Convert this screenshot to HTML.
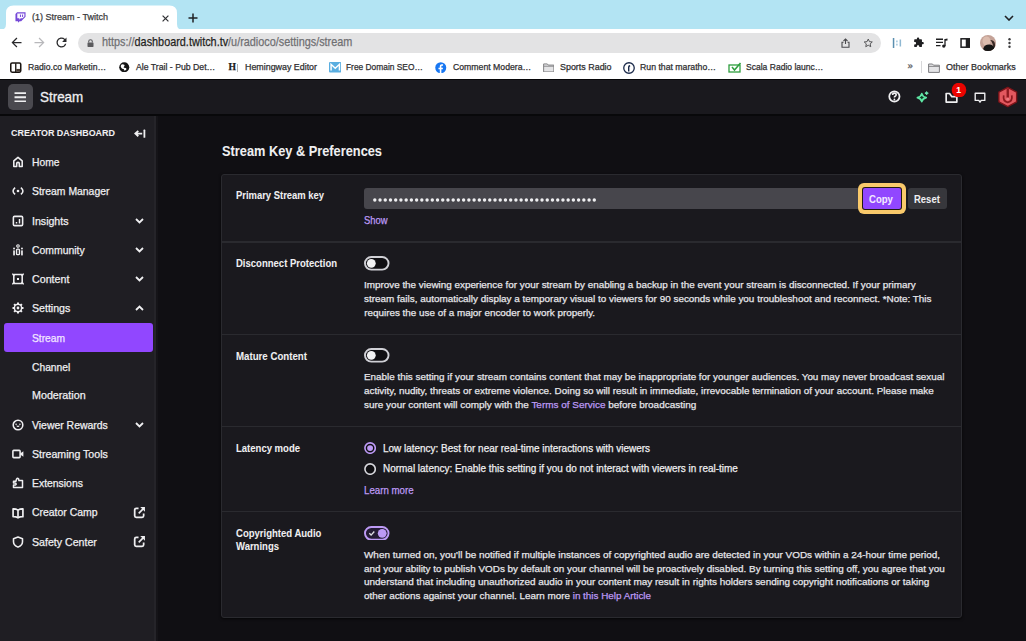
<!DOCTYPE html>
<html><head><meta charset="utf-8"><title>Stream - Twitch</title>
<style>
html,body{margin:0;padding:0;}
body{width:1026px;height:641px;overflow:hidden;position:relative;background:#100f13;font-family:"Liberation Sans",sans-serif;}
.r{position:absolute;display:block;}
.t{position:absolute;white-space:nowrap;line-height:1;transform-origin:0 0;-webkit-text-stroke:0.25px currentColor;}
</style></head><body>
<div class="r" style="left:0.00px;top:0.00px;width:1026.00px;height:29.40px;background:#b3e4f3;"></div>
<div class="r" style="left:0.00px;top:29.40px;width:1026.00px;height:49.60px;background:#ffffff;"></div>
<svg class="r" style="left:0.00px;top:4.00px;" width="190" height="27" viewBox="0 0 190 27"><path d="M0 26 Q6 26 6 20 L6 9 Q6 1.5 13.5 1.5 L169.5 1.5 Q177 1.5 177 9 L177 20 Q177 26 183 26 L183 27 L0 27 Z" fill="#ffffff"/></svg>
<svg class="r" style="left:15.00px;top:11.80px;" width="11" height="11" viewBox="0 0 24 24"><path d="M4.5 0.5 L1 4.5 V20 H6.5 V23.5 L10 20 H13.5 L23 10.5 V0.5 Z" fill="#7548d8"/><path d="M5 3 H20.5 V9.8 L16.5 13.8 H12.5 L9.5 16.8 V13.8 H5 Z" fill="#fbf8ff"/><rect x="10.8" y="5.6" width="2.2" height="5.2" fill="#7548d8"/><rect x="15.4" y="5.6" width="2.2" height="5.2" fill="#7548d8"/></svg>
<div class="t" style="left:31.70px;top:12.98px;font-size:9.00px;color:#3c3c3e;transform:scaleX(1.0020);">(1) Stream - Twitch</div>
<svg class="r" style="left:162.00px;top:14.80px;" width="7" height="7" viewBox="0 0 7 7"><path d="M0.6 0.6 L6.4 6.4 M6.4 0.6 L0.6 6.4" stroke="#303134" stroke-width="1.2"/></svg>
<svg class="r" style="left:188.00px;top:13.00px;" width="10" height="10" viewBox="0 0 10 10"><path d="M5 0.5 V9.5 M0.5 5 H9.5" stroke="#202124" stroke-width="1.5"/></svg>
<svg class="r" style="left:1004.00px;top:14.50px;" width="10" height="6" viewBox="0 0 10 6"><path d="M1 1 L5 5 L9 1" stroke="#202124" stroke-width="1.6" fill="none"/></svg>
<svg class="r" style="left:8.60px;top:35.20px;" width="15" height="15" viewBox="0 0 24 24"><path d="M20 11H7.83l5.59-5.59L12 4l-8 8 8 8 1.41-1.41L7.83 13H20v-2z" fill="#2a2a2c"/></svg>
<svg class="r" style="left:31.60px;top:35.20px;" width="15" height="15" viewBox="0 0 24 24"><path d="M4 11h12.17l-5.59-5.59L12 4l8 8-8 8-1.41-1.41L16.17 13H4v-2z" fill="#b8b8bb"/></svg>
<svg class="r" style="left:54.20px;top:35.20px;" width="15" height="15" viewBox="0 0 24 24"><path d="M17.65 6.35A7.958 7.958 0 0 0 12 4c-4.42 0-7.99 3.58-7.99 8s3.57 8 7.99 8c3.73 0 6.84-2.55 7.73-6h-2.08A5.99 5.99 0 0 1 12 18c-3.31 0-6-2.690-6-6s2.69-6 6-6c1.66 0 3.14.69 4.22 1.78L13 11h7V4l-2.35 2.35z" fill="#2a2a2c"/></svg>
<div class="r" style="left:77.50px;top:32.80px;width:803.00px;height:19.80px;background:#e3e3e4;border-radius:10px;"></div>
<svg class="r" style="left:86.50px;top:39.00px;" width="7" height="8" viewBox="0 0 7 8"><path d="M1.7 3.6 V2.6 A1.8 1.8 0 0 1 5.3 2.6 V3.6" stroke="#5b5b5e" stroke-width="1.1" fill="none"/><rect x="0.5" y="3.5" width="6" height="4.4" rx="0.6" fill="#5b5b5e"/></svg>
<div class="t" style="left:101.80px;top:35.88px;font-size:12.90px;color:#1f1f21;transform:scaleX(0.8419);"><span style="color:#6f6f72">https://</span><span style="color:#1f1f21">dashboard.twitch.tv</span><span style="color:#6f6f72">/u/radioco/settings/stream</span></div>
<svg class="r" style="left:840.50px;top:38.00px;" width="9" height="10" viewBox="0 0 9 10"><path d="M4.5 6 V1 M2.5 3 L4.5 1 L6.5 3" stroke="#4a4a4d" stroke-width="1.1" fill="none"/><path d="M2.5 4.3 H1 V9.3 H8 V4.3 H6.5" stroke="#4a4a4d" stroke-width="1.1" fill="none"/></svg>
<svg class="r" style="left:862.50px;top:37.80px;" width="10.5" height="10" viewBox="0 0 24 24"><path d="M12 2.5 L14.9 8.8 L21.7 9.5 L16.6 14.1 L18 20.9 L12 17.4 L6 20.9 L7.4 14.1 L2.3 9.5 L9.1 8.8 Z" stroke="#4a4a4d" stroke-width="2.2" fill="none" stroke-linejoin="round"/></svg>
<svg class="r" style="left:891.50px;top:36.50px;" width="10" height="12" viewBox="0 0 10 12"><rect x="0.8" y="1" width="1.5" height="10" fill="#5b8fb0"/><rect x="4.2" y="3.5" width="1.4" height="1.8" fill="#9cc3db"/><rect x="4.2" y="6.7" width="1.4" height="1.8" fill="#9cc3db"/><rect x="7.6" y="2.5" width="1.5" height="7" fill="#8fb8d2"/></svg>
<svg class="r" style="left:913.00px;top:37.00px;" width="11.5" height="11" viewBox="0 0 24 24"><path d="M20.5 11H19V7c0-1.1-.9-2-2-2h-4V3.5C13 2.12 11.88 1 10.5 1S8 2.12 8 3.5V5H4c-1.1 0-1.99.9-1.99 2v3.8H3.5c1.49 0 2.7 1.21 2.7 2.7s-1.21 2.7-2.7 2.7H2V20c0 1.1.9 2 2 2h3.8v-1.5c0-1.49 1.21-2.7 2.7-2.7 1.49 0 2.7 1.21 2.7 2.7V22H17c1.1 0 2-.9 2-2v-4h1.5c1.38 0 2.5-1.12 2.5-2.5S21.88 11 20.5 11z" fill="#1f1f21"/></svg>
<svg class="r" style="left:936.00px;top:37.50px;" width="12" height="10" viewBox="0 0 12 10"><path d="M0 1.2 H7 M0 4.4 H7 M0 7.6 H4.5" stroke="#1f1f21" stroke-width="1.4"/><path d="M9 1 V8" stroke="#1f1f21" stroke-width="1.3"/><circle cx="7.8" cy="8.1" r="1.7" fill="#1f1f21"/><path d="M9 1 L11.5 0.6 V2.4 L9 2.8 Z" fill="#1f1f21"/></svg>
<svg class="r" style="left:959.50px;top:37.50px;" width="10.5" height="10" viewBox="0 0 10 10"><rect x="0.8" y="0.8" width="8.4" height="8.4" stroke="#1f1f21" stroke-width="1.5" fill="none"/><rect x="5.5" y="0.8" width="3.7" height="8.4" fill="#1f1f21"/></svg>
<svg class="r" style="left:979.50px;top:35.00px;" width="16" height="16" viewBox="0 0 16 16"><defs><clipPath id="av"><circle cx="8" cy="8" r="8"/></clipPath></defs><g clip-path="url(#av)"><rect width="16" height="16" fill="#c4a297"/><ellipse cx="6.5" cy="6" rx="4" ry="4.5" fill="#dcbcae"/><path d="M3 16 Q3.5 10.5 8 10 Q12 9.5 13.5 12 Q12 6 10 5 Q14.5 5 15 9 L16 16 Z" fill="#3a2a26"/><ellipse cx="9" cy="13.5" rx="5.5" ry="4" fill="#151515"/></g></svg>
<svg class="r" style="left:1008.30px;top:38.00px;" width="3" height="10" viewBox="0 0 3 10"><circle cx="1.5" cy="1.3" r="1.2" fill="#3a3a3c"/><circle cx="1.5" cy="5" r="1.2" fill="#3a3a3c"/><circle cx="1.5" cy="8.7" r="1.2" fill="#3a3a3c"/></svg>
<svg class="r" style="left:10.00px;top:61.60px;" width="11.5" height="11" viewBox="0 0 12 11"><rect x="0.8" y="0.8" width="10.4" height="9.6" rx="1.4" fill="#ffffff" stroke="#1a1410" stroke-width="1.6"/><path d="M6 1 V10.2" stroke="#1a1410" stroke-width="1.4"/><rect x="6.5" y="7" width="4" height="2.8" fill="#4a3e34"/></svg>
<div class="t" style="left:27.50px;top:63.07px;font-size:8.90px;color:#2f2f31;transform:scaleX(0.9712);">Radio.co Marketin…</div>
<svg class="r" style="left:119.00px;top:61.80px;" width="10.5" height="10.5" viewBox="0 0 24 24"><circle cx="12" cy="12" r="11.5" fill="#151515"/><path d="M6 5.5 Q9 4.5 12 6 Q14 8 11.5 10 Q9.5 11.5 11.5 13 L15.5 13.5 Q18 14.5 16.5 17.5 Q14.5 20 11 19 Q12.5 17 10.5 16 Q7 15.5 5.5 13.5 Q3 10.5 4.5 7.5 Z" fill="#ffffff"/></svg>
<div class="t" style="left:135.80px;top:63.07px;font-size:8.90px;color:#2f2f31;transform:scaleX(0.9801);">Ale Trail - Pub Det…</div>
<div class="t" style="left:228.6px;top:61.87px;font-size:9.6px;font-family:'Liberation Serif',serif;font-weight:700;color:#1a1a1a;">H</div>
<div class="r" style="left:236.60px;top:63.50px;width:1.20px;height:8.50px;background:#b0b0b0;"></div>
<div class="t" style="left:244.80px;top:63.07px;font-size:8.90px;color:#2f2f31;transform:scaleX(0.9998);">Hemingway Editor</div>
<svg class="r" style="left:328.60px;top:62.10px;" width="12.5" height="10.5" viewBox="0 0 12 10"><rect x="0" y="0" width="12" height="10" rx="1" fill="#5aaee0"/><path d="M2 8 V2.2 L6 6 L10 2.2 V8" stroke="#ffffff" stroke-width="1.4" fill="none"/></svg>
<div class="t" style="left:346.00px;top:63.07px;font-size:8.90px;color:#2f2f31;transform:scaleX(0.9436);">Free Domain SEO…</div>
<svg class="r" style="left:435.00px;top:61.90px;" width="11.5" height="11.5" viewBox="0 0 24 24"><circle cx="12" cy="12" r="11.5" fill="#1877f2"/><path d="M13.3 24 V15.2 H16.2 L16.7 11.8 H13.3 V9.6 C13.3 8.6 13.7 7.9 15.1 7.9 H16.8 V4.9 C16.5 4.9 15.4 4.8 14.2 4.8 C11.7 4.8 10 6.3 10 9.1 V11.8 H7.2 V15.2 H10 V24 Z" fill="#ffffff"/></svg>
<div class="t" style="left:452.50px;top:63.07px;font-size:8.90px;color:#2f2f31;transform:scaleX(0.9798);">Comment Modera…</div>
<svg class="r" style="left:542.60px;top:62.60px;" width="11.5" height="9.5" viewBox="0 0 12 10"><path d="M0.6 1 H4.5 L5.5 2.2 H11.4 V9.4 H0.6 Z" fill="#e4e4e6" stroke="#7d7d80" stroke-width="1"/><path d="M0.6 3.4 H11.4" stroke="#7d7d80" stroke-width="0.9"/></svg>
<div class="t" style="left:559.80px;top:63.07px;font-size:8.90px;color:#2f2f31;transform:scaleX(1.0049);">Sports Radio</div>
<svg class="r" style="left:622.80px;top:61.80px;" width="12" height="12" viewBox="0 0 24 24"><circle cx="12" cy="12" r="10.5" fill="none" stroke="#1b2a4a" stroke-width="2.6"/><path d="M10 19 V10 Q10 6 14 6 L14.5 9 Q12.8 9 12.8 11 V19 Z" fill="#1b2a4a"/></svg>
<div class="t" style="left:640.30px;top:63.07px;font-size:8.90px;color:#2f2f31;transform:scaleX(0.9812);">Run that maratho…</div>
<svg class="r" style="left:728.00px;top:62.10px;" width="14" height="11" viewBox="0 0 14 11"><rect x="1" y="3" width="11" height="7" fill="none" stroke="#2e9e3e" stroke-width="1.3"/><path d="M4 5 L6.5 8 L12.5 1" stroke="#2e9e3e" stroke-width="1.5" fill="none"/></svg>
<div class="t" style="left:746.00px;top:63.07px;font-size:8.90px;color:#2f2f31;transform:scaleX(0.9624);">Scala Radio launc…</div>
<div class="t" style="left:907.50px;top:61.46px;font-size:9.50px;color:#555558;">»</div>
<div class="r" style="left:920.50px;top:61.00px;width:1.00px;height:12.00px;background:#d8d8da;"></div>
<svg class="r" style="left:928.00px;top:62.60px;" width="12" height="10" viewBox="0 0 12 10"><path d="M0.6 1 H4.5 L5.5 2.2 H11.4 V9.4 H0.6 Z" fill="#e4e4e6" stroke="#7d7d80" stroke-width="1"/><path d="M0.6 3.4 H11.4" stroke="#7d7d80" stroke-width="0.9"/></svg>
<div class="t" style="left:945.50px;top:63.07px;font-size:8.90px;color:#2f2f31;transform:scaleX(1.0110);">Other Bookmarks</div>
<div class="r" style="left:0.00px;top:78.50px;width:1026.00px;height:36.00px;background:#1a191e;"></div>
<div class="r" style="left:0.00px;top:78.80px;width:1026.00px;height:1.60px;background:#060608;"></div>
<div class="r" style="left:0.00px;top:113.60px;width:1026.00px;height:2.20px;background:#08080a;"></div>
<div class="r" style="left:7.50px;top:84.00px;width:25.50px;height:25.50px;background:#4a494f;border-radius:5px;"></div>
<svg class="r" style="left:14.00px;top:91.50px;" width="12.5" height="10.5" viewBox="0 0 12 10"><path d="M0.5 1 H11.5 M0.5 5 H11.5 M0.5 9 H11.5" stroke="#efeff1" stroke-width="1.8"/></svg>
<div class="t" style="left:40px;top:90.03px;font-size:14.5px;color:#efeff1;-webkit-text-stroke:0.3px #efeff1;transform:scaleX(0.925)">Stream</div>
<svg class="r" style="left:887.80px;top:90.20px;" width="12.8" height="12.8" viewBox="0 0 20 20"><circle cx="10" cy="10" r="8" fill="none" stroke="#efeff1" stroke-width="2.8"/><path d="M7.2 7.8 Q7.2 4.9 10 4.9 Q12.8 4.9 12.8 7.5 Q12.8 9 11.1 9.9 Q10 10.4 10 11.8" fill="none" stroke="#efeff1" stroke-width="2.5"/><circle cx="10" cy="14.6" r="1.4" fill="#efeff1"/></svg>
<svg class="r" style="left:915.50px;top:91.00px;" width="13" height="12" viewBox="0 0 13 12"><path d="M5.8 2.6 Q6.6 5.8 10.2 6.6 Q6.6 7.4 5.8 10.6 Q5 7.4 1.4 6.6 Q5 5.8 5.8 2.6 Z" fill="#0f3d28" stroke="#5ee6a4" stroke-width="1.7" stroke-linejoin="round"/><path d="M10.6 0.6 Q11 1.9 12.3 2.2 Q11 2.5 10.6 3.8 Q10.2 2.5 8.9 2.2 Q10.2 1.9 10.6 0.6 Z" fill="#6fe8b0" stroke="#6fe8b0" stroke-width="0.9" stroke-linejoin="round"/></svg>
<svg class="r" style="left:944.50px;top:91.50px;" width="13" height="11.5" viewBox="0 0 20 17"><path d="M1.8 2 H7 L10.5 6.8 H18.2 V15.2 H1.8 Z" fill="none" stroke="#efeff1" stroke-width="2.6" stroke-linejoin="round"/></svg>
<svg class="r" style="left:950.50px;top:82.50px;" width="16" height="14" viewBox="0 0 16 14"><circle cx="8" cy="7" r="7.3" fill="#eb0400"/></svg>
<div class="t" style="left:956.30px;top:85.52px;font-size:8.60px;color:#ffffff;font-weight:700;-webkit-text-stroke:0.05px currentColor;">1</div>
<svg class="r" style="left:973.50px;top:91.50px;" width="12" height="12" viewBox="0 0 20 20"><path d="M2 2 H18 V14 H12 L10 17 L8 14 H2 Z" fill="none" stroke="#efeff1" stroke-width="2.3" stroke-linejoin="round"/></svg>
<svg class="r" style="left:997.00px;top:85.50px;" width="21.5" height="22" viewBox="0 0 40 40"><path d="M20 2 L36.5 11 V29 L20 38 L3.5 29 V11 Z" fill="#e2585f" stroke="#7d1419" stroke-width="2.5" stroke-linejoin="round"/><path d="M12.5 17 Q10.5 28 20 30 Q29.5 28 27.5 17" fill="none" stroke="#8e1a20" stroke-width="3.2"/><rect x="17.8" y="4" width="4.4" height="17" fill="#8e1a20"/><circle cx="20" cy="24" r="2.6" fill="#ec7a80"/></svg>
<div class="r" style="left:0.00px;top:115.80px;width:156.00px;height:526.00px;background:#1f1e23;"></div>
<div class="r" style="left:154.00px;top:115.80px;width:2.00px;height:526.00px;background:#252429;"></div>
<div class="r" style="left:156.00px;top:115.80px;width:1.50px;height:526.00px;background:#151418;"></div>
<div class="t" style="left:11.00px;top:128.93px;font-size:9.30px;color:#efeff1;font-weight:700;-webkit-text-stroke:0.05px currentColor;transform:scaleX(0.9615);">CREATOR DASHBOARD</div>
<svg class="r" style="left:133.50px;top:128.50px;" width="12" height="9.5" viewBox="0 0 12 9.5"><path d="M8.2 4.6 H1.6 M4.3 1.9 L1.4 4.6 L4.3 7.3" stroke="#efeff1" stroke-width="1.9" fill="none"/><rect x="9.5" y="0.6" width="1.8" height="8.2" rx="0.6" fill="#efeff1"/></svg>
<div class="r" style="left:3.70px;top:322.60px;width:149.70px;height:29.50px;background:#9147ff;border-radius:3px;"></div>
<div class="t" style="left:32.40px;top:157.11px;font-size:10.50px;color:#efeff1;transform:scaleX(0.9819);">Home</div>
<svg class="r" style="left:12.00px;top:156.20px;" width="12" height="12" viewBox="0 0 20 20"><path d="M10 2.2 L17 8.2 V17.5 H12.2 V12.5 Q12.2 10.6 10 10.6 Q7.8 10.6 7.8 12.5 V17.5 H3 V8.2 Z" fill="none" stroke="#efeff1" stroke-width="2.6" stroke-linejoin="round"/></svg>
<div class="t" style="left:32.40px;top:186.21px;font-size:10.50px;color:#efeff1;transform:scaleX(0.9898);">Stream Manager</div>
<svg class="r" style="left:12.00px;top:185.30px;" width="12" height="12" viewBox="0 0 20 20"><circle cx="10" cy="10" r="2.2" fill="#efeff1"/><path d="M5.2 4.2 Q1.8 6.8 1.8 10 Q1.8 13.2 5.2 15.8 M14.8 4.2 Q18.2 6.8 18.2 10 Q18.2 13.2 14.8 15.8" fill="none" stroke="#efeff1" stroke-width="2.6"/></svg>
<div class="t" style="left:32.40px;top:215.51px;font-size:10.50px;color:#efeff1;transform:scaleX(1.0087);">Insights</div>
<svg class="r" style="left:12.00px;top:214.60px;" width="12" height="12" viewBox="0 0 20 20"><rect x="2.3" y="2.3" width="15.4" height="15.4" rx="2" fill="none" stroke="#efeff1" stroke-width="2.6"/><path d="M7.5 11.5 V14.2 M12.5 6.5 V14.2" stroke="#efeff1" stroke-width="2.4"/></svg>
<svg class="r" style="left:134.50px;top:217.60px;" width="9" height="6" viewBox="0 0 9 6"><path d="M1 1 L4.5 4.5 L8 1" stroke="#efeff1" stroke-width="1.8" fill="none"/></svg>
<div class="t" style="left:32.40px;top:244.71px;font-size:10.50px;color:#efeff1;transform:scaleX(0.9926);">Community</div>
<svg class="r" style="left:12.00px;top:243.80px;" width="12" height="12" viewBox="0 0 20 20"><circle cx="10" cy="3.3" r="2.1" fill="none" stroke="#efeff1" stroke-width="1.9"/><rect x="7.6" y="8.6" width="4.8" height="9.2" rx="1.6" fill="none" stroke="#efeff1" stroke-width="2.3"/><circle cx="3.4" cy="7.6" r="1.6" fill="#efeff1"/><circle cx="16.6" cy="7.6" r="1.6" fill="#efeff1"/><rect x="2" y="10.4" width="2.8" height="8.6" rx="0.8" fill="#efeff1"/><rect x="15.2" y="10.4" width="2.8" height="8.6" rx="0.8" fill="#efeff1"/></svg>
<svg class="r" style="left:134.50px;top:246.80px;" width="9" height="6" viewBox="0 0 9 6"><path d="M1 1 L4.5 4.5 L8 1" stroke="#efeff1" stroke-width="1.8" fill="none"/></svg>
<div class="t" style="left:32.40px;top:274.01px;font-size:10.50px;color:#efeff1;transform:scaleX(1.0171);">Content</div>
<svg class="r" style="left:12.00px;top:273.10px;" width="12" height="12" viewBox="0 0 20 20"><path d="M0.5 2.6 H19.5 M0.5 17.4 H19.5 M3 2.6 V17.4 M17 2.6 V17.4" stroke="#efeff1" stroke-width="2.6"/><path d="M0.5 1.3 L4.5 4.5 M19.5 1.3 L15.5 4.5 M0.5 18.7 L4.5 15.5 M19.5 18.7 L15.5 15.5" stroke="#efeff1" stroke-width="1.6"/><rect x="8.3" y="8.3" width="3.4" height="3.4" fill="#efeff1"/></svg>
<svg class="r" style="left:134.50px;top:276.10px;" width="9" height="6" viewBox="0 0 9 6"><path d="M1 1 L4.5 4.5 L8 1" stroke="#efeff1" stroke-width="1.8" fill="none"/></svg>
<div class="t" style="left:32.40px;top:303.21px;font-size:10.50px;color:#efeff1;transform:scaleX(1.0095);">Settings</div>
<svg class="r" style="left:12.00px;top:302.30px;" width="12" height="12" viewBox="0 0 20 20"><path d="M8.15 3.04 L8.43 0.83 L11.57 0.83 L11.85 3.04 L13.61 3.77 L15.37 2.41 L17.59 4.63 L16.23 6.39 L16.96 8.15 L19.17 8.43 L19.17 11.57 L16.96 11.85 L16.23 13.61 L17.59 15.37 L15.37 17.59 L13.61 16.23 L11.85 16.96 L11.57 19.17 L8.43 19.17 L8.15 16.96 L6.39 16.23 L4.63 17.59 L2.41 15.37 L3.77 13.61 L3.04 11.85 L0.83 11.57 L0.83 8.43 L3.04 8.15 L3.77 6.39 L2.41 4.63 L4.63 2.41 L6.39 3.77 Z M10 5.2 A4.8 4.8 0 1 0 10 14.8 A4.8 4.8 0 1 0 10 5.2 Z" fill="#efeff1" fill-rule="evenodd"/><circle cx="10" cy="10" r="2.3" fill="#efeff1"/></svg>
<svg class="r" style="left:134.50px;top:305.30px;" width="9" height="6" viewBox="0 0 9 6"><path d="M1 5 L4.5 1.5 L8 5" stroke="#efeff1" stroke-width="1.8" fill="none"/></svg>
<div class="t" style="left:32.40px;top:332.51px;font-size:10.50px;color:#f2e6ff;transform:scaleX(0.9781);">Stream</div>
<div class="t" style="left:32.40px;top:361.71px;font-size:10.50px;color:#efeff1;transform:scaleX(0.9793);">Channel</div>
<div class="t" style="left:32.40px;top:390.41px;font-size:10.50px;color:#efeff1;transform:scaleX(1.0204);">Moderation</div>
<div class="t" style="left:32.40px;top:419.71px;font-size:10.50px;color:#efeff1;transform:scaleX(0.9941);">Viewer Rewards</div>
<svg class="r" style="left:12.00px;top:418.80px;" width="12" height="12" viewBox="0 0 20 20"><circle cx="10" cy="10" r="8" fill="none" stroke="#efeff1" stroke-width="2.6"/><circle cx="6.8" cy="8.6" r="1.3" fill="#efeff1"/><circle cx="13.2" cy="8.6" r="1.3" fill="#efeff1"/><path d="M7.8 11.6 Q10 14.6 12.2 11.6 Z" fill="#efeff1" stroke="#efeff1" stroke-width="1"/></svg>
<svg class="r" style="left:134.50px;top:421.80px;" width="9" height="6" viewBox="0 0 9 6"><path d="M1 1 L4.5 4.5 L8 1" stroke="#efeff1" stroke-width="1.8" fill="none"/></svg>
<div class="t" style="left:32.40px;top:448.91px;font-size:10.50px;color:#efeff1;transform:scaleX(1.0095);">Streaming Tools</div>
<svg class="r" style="left:12.00px;top:448.00px;" width="12" height="12" viewBox="0 0 20 20"><rect x="1.5" y="4" width="12" height="12" rx="1.5" fill="none" stroke="#efeff1" stroke-width="2.6"/><path d="M13.5 9 L19 5.5 V14.5 L13.5 11 Z" fill="#efeff1"/></svg>
<div class="t" style="left:32.40px;top:478.21px;font-size:10.50px;color:#efeff1;transform:scaleX(0.9910);">Extensions</div>
<svg class="r" style="left:12.00px;top:477.30px;" width="12" height="12" viewBox="0 0 20 20"><path d="M2.5 7 H6.5 L7.5 3.5 Q9 1.5 11 3 L11.5 6 H17.5 V17.5 H2.5 V13.5 H5.5 Q7.5 12.5 6.8 11 Q6.3 9.8 4.5 10 H2.5 Z" fill="none" stroke="#efeff1" stroke-width="2.5" stroke-linejoin="round"/></svg>
<div class="t" style="left:32.40px;top:507.41px;font-size:10.50px;color:#efeff1;transform:scaleX(0.9934);">Creator Camp</div>
<svg class="r" style="left:12.00px;top:506.50px;" width="12" height="12" viewBox="0 0 20 20"><path d="M1.8 3.2 Q6 2.8 10 5.2 Q14 2.8 18.2 3.2 V16.2 Q14 15.8 10 18 Q6 15.8 1.8 16.2 Z" fill="none" stroke="#efeff1" stroke-width="2.8" stroke-linejoin="round"/><path d="M10 5 V17.5" stroke="#efeff1" stroke-width="2.8"/></svg>
<svg class="r" style="left:132.60px;top:505.90px;" width="13" height="13" viewBox="0 0 20 20"><path d="M8.5 3.6 H5 Q2.6 3.6 2.6 6 V15 Q2.6 17.4 5 17.4 H14 Q16.4 17.4 16.4 15 V11.5" fill="none" stroke="#efeff1" stroke-width="2.7"/><path d="M8.8 11.2 L15.5 4.5" fill="none" stroke="#efeff1" stroke-width="2.6"/><path d="M11.2 1.6 H18.4 V8.8 Z" fill="#efeff1"/></svg>
<div class="t" style="left:32.40px;top:536.71px;font-size:10.50px;color:#efeff1;transform:scaleX(1.0110);">Safety Center</div>
<svg class="r" style="left:12.00px;top:535.80px;" width="12" height="12" viewBox="0 0 20 20"><path d="M10 1.8 L17.5 4.5 V9.5 Q17.5 15.5 10 18.5 Q2.5 15.5 2.5 9.5 V4.5 Z" fill="none" stroke="#efeff1" stroke-width="2.6" stroke-linejoin="round"/></svg>
<svg class="r" style="left:132.60px;top:535.20px;" width="13" height="13" viewBox="0 0 20 20"><path d="M8.5 3.6 H5 Q2.6 3.6 2.6 6 V15 Q2.6 17.4 5 17.4 H14 Q16.4 17.4 16.4 15 V11.5" fill="none" stroke="#efeff1" stroke-width="2.7"/><path d="M8.8 11.2 L15.5 4.5" fill="none" stroke="#efeff1" stroke-width="2.6"/><path d="M11.2 1.6 H18.4 V8.8 Z" fill="#efeff1"/></svg>
<div class="r" style="left:157.50px;top:115.80px;width:868.50px;height:526.00px;background:#100f13;"></div>
<div class="t" style="left:221.50px;top:144.52px;font-size:13.80px;color:#efeff1;font-weight:700;-webkit-text-stroke:0.05px currentColor;transform:scaleX(0.9271);">Stream Key &amp; Preferences</div>
<div class="r" style="left:221.00px;top:173.50px;width:741.00px;height:444.00px;background:#1a191e;border:1px solid #2a2a2f;box-sizing:border-box;border-radius:3px;box-shadow:0 1px 3px rgba(0,0,0,0.7);"></div>
<div class="r" style="left:222.00px;top:241.30px;width:739.00px;height:1.40px;background:#2a2a2f;"></div>
<div class="r" style="left:222.00px;top:333.80px;width:739.00px;height:1.40px;background:#2a2a2f;"></div>
<div class="r" style="left:222.00px;top:425.60px;width:739.00px;height:1.40px;background:#2a2a2f;"></div>
<div class="r" style="left:222.00px;top:510.50px;width:739.00px;height:1.40px;background:#2a2a2f;"></div>
<div class="t" style="left:236.00px;top:190.01px;font-size:10.50px;color:#efeff1;font-weight:700;-webkit-text-stroke:0.05px currentColor;transform:scaleX(0.8974);">Primary Stream key</div>
<div class="r" style="left:364.00px;top:188.40px;width:496.00px;height:20.80px;background:#47464c;border-radius:3px;"></div>
<svg class="r" style="left:372.50px;top:194.90px;" width="226" height="10" viewBox="0 0 226 10"><circle cx="1.80" cy="5" r="1.7" fill="#efeff1"/><circle cx="7.03" cy="5" r="1.7" fill="#efeff1"/><circle cx="12.25" cy="5" r="1.7" fill="#efeff1"/><circle cx="17.48" cy="5" r="1.7" fill="#efeff1"/><circle cx="22.70" cy="5" r="1.7" fill="#efeff1"/><circle cx="27.93" cy="5" r="1.7" fill="#efeff1"/><circle cx="33.16" cy="5" r="1.7" fill="#efeff1"/><circle cx="38.38" cy="5" r="1.7" fill="#efeff1"/><circle cx="43.61" cy="5" r="1.7" fill="#efeff1"/><circle cx="48.83" cy="5" r="1.7" fill="#efeff1"/><circle cx="54.06" cy="5" r="1.7" fill="#efeff1"/><circle cx="59.29" cy="5" r="1.7" fill="#efeff1"/><circle cx="64.51" cy="5" r="1.7" fill="#efeff1"/><circle cx="69.74" cy="5" r="1.7" fill="#efeff1"/><circle cx="74.96" cy="5" r="1.7" fill="#efeff1"/><circle cx="80.19" cy="5" r="1.7" fill="#efeff1"/><circle cx="85.42" cy="5" r="1.7" fill="#efeff1"/><circle cx="90.64" cy="5" r="1.7" fill="#efeff1"/><circle cx="95.87" cy="5" r="1.7" fill="#efeff1"/><circle cx="101.09" cy="5" r="1.7" fill="#efeff1"/><circle cx="106.32" cy="5" r="1.7" fill="#efeff1"/><circle cx="111.55" cy="5" r="1.7" fill="#efeff1"/><circle cx="116.77" cy="5" r="1.7" fill="#efeff1"/><circle cx="122.00" cy="5" r="1.7" fill="#efeff1"/><circle cx="127.22" cy="5" r="1.7" fill="#efeff1"/><circle cx="132.45" cy="5" r="1.7" fill="#efeff1"/><circle cx="137.68" cy="5" r="1.7" fill="#efeff1"/><circle cx="142.90" cy="5" r="1.7" fill="#efeff1"/><circle cx="148.13" cy="5" r="1.7" fill="#efeff1"/><circle cx="153.35" cy="5" r="1.7" fill="#efeff1"/><circle cx="158.58" cy="5" r="1.7" fill="#efeff1"/><circle cx="163.81" cy="5" r="1.7" fill="#efeff1"/><circle cx="169.03" cy="5" r="1.7" fill="#efeff1"/><circle cx="174.26" cy="5" r="1.7" fill="#efeff1"/><circle cx="179.48" cy="5" r="1.7" fill="#efeff1"/><circle cx="184.71" cy="5" r="1.7" fill="#efeff1"/><circle cx="189.94" cy="5" r="1.7" fill="#efeff1"/><circle cx="195.16" cy="5" r="1.7" fill="#efeff1"/><circle cx="200.39" cy="5" r="1.7" fill="#efeff1"/><circle cx="205.61" cy="5" r="1.7" fill="#efeff1"/><circle cx="210.84" cy="5" r="1.7" fill="#efeff1"/><circle cx="216.07" cy="5" r="1.7" fill="#efeff1"/><circle cx="221.29" cy="5" r="1.7" fill="#efeff1"/></svg>
<div class="t" style="left:364.30px;top:214.73px;font-size:10.60px;color:#bd9af5;transform:scaleX(0.8863);">Show</div>
<div class="r" style="left:863.00px;top:188.20px;width:37.80px;height:20.60px;background:#9147ff;border-radius:2px;box-shadow:0 0 0 1px #201a10,0 0 0 5px #f9c96b;"></div>
<div class="t" style="left:868.80px;top:194.29px;font-size:11.00px;color:#f4eaff;font-weight:700;-webkit-text-stroke:0.05px currentColor;transform:scaleX(0.8655);">Copy</div>
<div class="r" style="left:908.40px;top:188.00px;width:38.20px;height:21.00px;background:#37373c;border-radius:3px;"></div>
<div class="t" style="left:914.00px;top:194.29px;font-size:11.00px;color:#efeff1;font-weight:700;-webkit-text-stroke:0.05px currentColor;transform:scaleX(0.8612);">Reset</div>
<div class="t" style="left:236.00px;top:258.01px;font-size:10.50px;color:#efeff1;font-weight:700;-webkit-text-stroke:0.05px currentColor;transform:scaleX(0.9064);">Disconnect Protection</div>
<svg class="r" style="left:364.00px;top:256.10px;" width="25.5" height="14.6" viewBox="0 0 25.5 14.6"><rect x="0.95" y="0.95" width="23.6" height="12.7" rx="6.35" fill="#0f0e12" stroke="#d0d0d6" stroke-width="1.9"/><circle cx="7.3" cy="7.3" r="4.4" fill="#f1f1f3"/></svg>
<div class="t" style="left:364.20px;top:280.32px;font-size:9.90px;color:#e6e6ea;transform:scaleX(0.9990);">Improve the viewing experience for your stream by enabling a backup in the event your stream is disconnected. If your primary</div>
<div class="t" style="left:364.20px;top:294.07px;font-size:9.90px;color:#e6e6ea;transform:scaleX(1.0032);">stream fails, automatically display a temporary visual to viewers for 90 seconds while you troubleshoot and reconnect. *Note: This</div>
<div class="t" style="left:364.20px;top:307.82px;font-size:9.90px;color:#e6e6ea;">requires the use of a major encoder to work properly.</div>
<div class="t" style="left:236.00px;top:350.51px;font-size:10.50px;color:#efeff1;font-weight:700;-webkit-text-stroke:0.05px currentColor;transform:scaleX(0.9222);">Mature Content</div>
<svg class="r" style="left:364.00px;top:348.30px;" width="25.5" height="14.6" viewBox="0 0 25.5 14.6"><rect x="0.95" y="0.95" width="23.6" height="12.7" rx="6.35" fill="#0f0e12" stroke="#d0d0d6" stroke-width="1.9"/><circle cx="7.3" cy="7.3" r="4.4" fill="#f1f1f3"/></svg>
<div class="t" style="left:364.20px;top:372.42px;font-size:9.90px;color:#e6e6ea;transform:scaleX(0.9984);">Enable this setting if your stream contains content that may be inappropriate for younger audiences. You may never broadcast sexual</div>
<div class="t" style="left:364.20px;top:386.17px;font-size:9.90px;color:#e6e6ea;transform:scaleX(0.9998);">activity, nudity, threats or extreme violence. Doing so will result in immediate, irrevocable termination of your account. Please make</div>
<div class="t" style="left:364.20px;top:399.92px;font-size:9.90px;color:#e6e6ea;transform:scaleX(1.0076);">sure your content will comply with the <span style="color:#bd9af5">Terms of Service</span> before broadcasting</div>
<div class="t" style="left:236.00px;top:442.81px;font-size:10.50px;color:#efeff1;font-weight:700;-webkit-text-stroke:0.05px currentColor;transform:scaleX(0.9065);">Latency mode</div>
<svg class="r" style="left:363.90px;top:442.20px;" width="12.2" height="12.2" viewBox="0 0 12 12"><circle cx="6" cy="6" r="5.1" fill="#0f0e12" stroke="#bd9af5" stroke-width="1.6"/><circle cx="6" cy="6" r="2.9" fill="#bd9af5"/></svg>
<svg class="r" style="left:363.90px;top:463.10px;" width="12.2" height="12.2" viewBox="0 0 12 12"><circle cx="6" cy="6" r="5.1" fill="#0f0e12" stroke="#d6d6dc" stroke-width="1.6"/></svg>
<div class="t" style="left:382.80px;top:442.63px;font-size:10.60px;color:#efeff1;transform:scaleX(0.9391);">Low latency: Best for near real-time interactions with viewers</div>
<div class="t" style="left:382.80px;top:463.03px;font-size:10.60px;color:#efeff1;transform:scaleX(0.9401);">Normal latency: Enable this setting if you do not interact with viewers in real-time</div>
<div class="t" style="left:364.00px;top:484.63px;font-size:10.60px;color:#bd9af5;transform:scaleX(0.9151);">Learn more</div>
<div class="t" style="left:236.00px;top:527.81px;font-size:10.50px;color:#efeff1;font-weight:700;-webkit-text-stroke:0.05px currentColor;transform:scaleX(0.9076);">Copyrighted Audio</div>
<div class="t" style="left:236.00px;top:541.31px;font-size:10.50px;color:#efeff1;font-weight:700;-webkit-text-stroke:0.05px currentColor;transform:scaleX(0.9063);">Warnings</div>
<svg class="r" style="left:364.00px;top:525.90px;" width="25.5" height="14.6" viewBox="0 0 25.5 14.6"><rect x="0.95" y="0.95" width="23.6" height="12.7" rx="6.35" fill="#241b35" stroke="#bd9af5" stroke-width="1.9"/><circle cx="18.2" cy="7.3" r="4.4" fill="#bd9af5"/><path d="M5.3 7.3 L7.1 9.1 L10.3 5.5" stroke="#dcdce2" stroke-width="1.4" fill="none"/></svg>
<div class="t" style="left:364.20px;top:549.92px;font-size:9.90px;color:#e6e6ea;transform:scaleX(1.0047);">When turned on, you'll be notified if multiple instances of copyrighted audio are detected in your VODs within a 24-hour time period,</div>
<div class="t" style="left:364.20px;top:563.67px;font-size:9.90px;color:#e6e6ea;transform:scaleX(1.0022);">and your ability to publish VODs by default on your channel will be proactively disabled. By turning this setting off, you agree that you</div>
<div class="t" style="left:364.20px;top:577.42px;font-size:9.90px;color:#e6e6ea;transform:scaleX(1.0078);">understand that including unauthorized audio in your content may result in rights holders sending copyright notifications or taking</div>
<div class="t" style="left:364.20px;top:591.17px;font-size:9.90px;color:#e6e6ea;transform:scaleX(0.9978);">other actions against your channel. Learn more <span style="color:#bd9af5">in this Help Article</span></div>
</body></html>
